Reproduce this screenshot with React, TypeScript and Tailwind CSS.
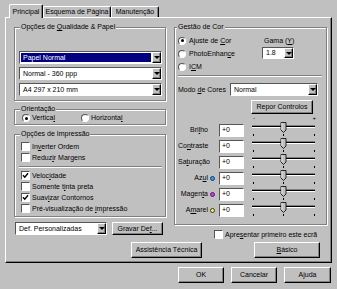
import React from "react";

const FONT = "font-['Liberation_Sans',Arial,sans-serif]";
const sunken = "border border-t-[#555] border-l-[#555] border-b-white border-r-white";
const raised =
  "border border-t-white border-l-white border-b-black border-r-black shadow-[inset_-1px_-1px_0_#808080] bg-[#c0c0c0]";

function Arrow() {
  return (
    <div className={`w-[9px] h-full flex items-center justify-center ${raised}`}>
      <div className="w-0 h-0 border-x-[3px] border-x-transparent border-t-[3px] border-t-black" />
    </div>
  );
}

function Select({ value, hl, className = "" }: { value: string; hl?: boolean; className?: string }) {
  return (
    <div className={`flex bg-white ${sunken} ${className}`}>
      <div
        className={`flex-1 flex items-center pl-[2px] m-[1px] whitespace-nowrap overflow-hidden ${
          hl ? "bg-[#000080] text-white" : ""
        }`}
      >
        {value}
      </div>
      <Arrow />
    </div>
  );
}

function Button({ children, className = "" }: { children: React.ReactNode; className?: string }) {
  return (
    <div className={`flex items-center justify-center whitespace-nowrap ${raised} ${className}`}>{children}</div>
  );
}

function Radio({ on }: { on?: boolean }) {
  return (
    <div
      className={`w-[8px] h-[8px] rounded-full bg-white flex items-center justify-center shrink-0 ${sunken}`}
    >
      {on && <div className="w-[3px] h-[3px] rounded-full bg-black" />}
    </div>
  );
}

function Check({ on }: { on?: boolean }) {
  return (
    <div className={`w-[9px] h-[9px] bg-white shrink-0 flex items-center justify-center ${sunken}`}>
      {on && (
        <svg width="7" height="7" viewBox="0 0 7 7">
          <path d="M1 3.2 L2.8 5.2 L6 1.3" fill="none" stroke="#000" strokeWidth="1.4" />
        </svg>
      )}
    </div>
  );
}

function Group({
  title,
  legend,
  className = "",
  children,
}: {
  title: React.ReactNode;
  legend: string;
  className?: string;
  children: React.ReactNode;
}) {
  return (
    <fieldset
      className={`border border-[#808080] shadow-[inset_1px_1px_0_#fff,1px_1px_0_#fff] min-w-0 ${className}`}
    >
      <legend className={`px-[1px] leading-[8px] bg-[#c0c0c0] ${legend}`}>{title}</legend>
      {children}
    </fieldset>
  );
}

function Slider() {
  return (
    <svg width="66" height="16" viewBox="0 0 66 16" className="self-start -mt-px">
      <rect x="1" y="3" width="63" height="1" fill="#808080" />
      <rect x="1" y="4" width="63" height="1" fill="#000" />
      <rect x="1" y="5" width="63" height="1" fill="#fff" />
      <polygon points="30,0.5 35,0.5 35,8 32.5,10.5 30,8" fill="#c0c0c0" stroke="#000" strokeWidth="0.8" />
      <line x1="30.8" y1="1" x2="30.8" y2="8" stroke="#fff" strokeWidth="0.8" />
      <rect x="2" y="12" width="1" height="2" fill="#000" />
      <rect x="32" y="12" width="1" height="2" fill="#000" />
      <rect x="63" y="12" width="1" height="2" fill="#000" />
    </svg>
  );
}

const rows: { label: React.ReactNode; dot?: string }[] = [
  { label: <>Bri<u>l</u>ho</> },
  { label: <>Co<u>n</u>traste</> },
  { label: <>Sa<u>t</u>uração</> },
  { label: <>Az<u>u</u>l</>, dot: "bg-[#19a8ff]" },
  { label: <>Magen<u>t</u>a</>, dot: "bg-[#ff1aff]" },
  { label: <>A<u>m</u>arel</>, dot: "bg-[#ffff00]" },
];

function Tab({ active, w, children }: { active?: boolean; w: string; children: React.ReactNode }) {
  return (
    <div
      className={`${w} ${
        active ? "h-[14px] -mb-px relative z-10" : "h-[11px]"
      } flex items-center justify-center whitespace-nowrap bg-[#c0c0c0] border-t border-l border-t-white border-l-white border-r border-r-black rounded-t-[2px] shadow-[inset_-1px_0_0_#808080]`}
    >
      {children}
    </div>
  );
}

export default function App() {
  return (
    <div
      className={`w-[337px] h-[289px] bg-[#c0c0c0] text-[7px] leading-[8px] text-black flex flex-col pt-[4px] ${FONT}`}
    >
      <div className="flex items-end h-[13px] pl-[9px]">
        <Tab active w="w-[34px]">
          Principal
        </Tab>
        <Tab w="w-[68px]">Esquema de Página</Tab>
        <Tab w="w-[48px]">Manutenção</Tab>
      </div>

      <div
        className={`ml-[5px] w-[327px] h-[246px] border border-t-white border-l-white border-r-black border-b-black shadow-[inset_-1px_-1px_0_#808080] pt-[5px] pl-[8px] flex flex-col`}
      >
        <div className="flex gap-[8px] items-start">
          {/* left column */}
          <div className="w-[152px] flex flex-col">
            <Group
              legend="ml-[5px]"
              title={
                <>
                  Opções de <u>Q</u>ualidade &amp; Papel
                </>
              }
            >
              <div className="flex flex-col gap-[3px] pt-[20px] pb-[4px] pl-[4px] pr-[3px]">
                <Select value="Papel Normal" hl className="h-[13px]" />
                <Select value="Normal - 360 ppp" className="h-[13px]" />
                <Select value="A4 297 x 210 mm" className="h-[13px]" />
              </div>
            </Group>

            <Group legend="ml-[5px]" title="Orientação" className="mt-[4px]">
              <div className="flex items-center h-[8px] mt-[1px] mb-[2px] pl-[7px]">
                <div className="w-[59px] flex items-center gap-[2px]">
                  <Radio on />
                  <span>
                    Vertica<u>l</u>
                  </span>
                </div>
                <div className="flex items-center gap-[2px]">
                  <Radio />
                  <span>
                    Horizonta<u>l</u>
                  </span>
                </div>
              </div>
            </Group>

            <Group legend="ml-[5px]" title="Opções de Impressão" className="mt-[5px]">
              <div className="flex flex-col pt-[3px] pb-[2px] pl-[6px]">
                {[
                  { on: false, t: <>In<u>v</u>erter Ordem</> },
                  { on: false, t: <>Reduz<u>i</u>r Margens</> },
                ].map((r, i) => (
                  <div key={i} className="h-[11px] flex items-center gap-[2px]">
                    <Check on={r.on} />
                    <span>{r.t}</span>
                  </div>
                ))}
                <div className="h-[7px] flex items-center ml-[-2px] mr-[3px]">
                  <div className="w-full h-[2px] border-t border-t-[#808080] border-b border-b-white" />
                </div>
                {[
                  { on: true, t: <>Veloc<u>i</u>dade</> },
                  { on: false, t: <>Somente t<u>i</u>nta preta</> },
                  { on: true, t: <>Suav<u>i</u>zar Contornos</> },
                  { on: false, t: <>Pré-visualização de <u>i</u>mpressão</> },
                ].map((r, i) => (
                  <div key={i} className="h-[11px] flex items-center gap-[2px]">
                    <Check on={r.on} />
                    <span>{r.t}</span>
                  </div>
                ))}
              </div>
            </Group>

            <div className="flex mt-[5px] ml-[1px] gap-[5px]">
              <Select value="Def. Personalizadas" className="w-[92px] h-[13px]" />
              <Button className="w-[51px] h-[13px]">
                Gravar De<u>f</u>...
              </Button>
            </div>
          </div>

          {/* right column */}
          <div className="w-[153px] flex flex-col">
            <Group legend="ml-[2px]" title="Gestão de Cor">
              <div className="flex flex-col pt-[3px] pb-[6px] pl-[3px]">
                <div className="flex">
                  <div className="w-[84px] flex flex-col">
                    <div className="h-[13px] flex items-center gap-[3px]">
                      <Radio on />
                      <span>
                        Ajuste de <u>C</u>or
                      </span>
                    </div>
                    <div className="h-[13px] flex items-center gap-[3px]">
                      <Radio />
                      <span>
                        PhotoEnhan<u>c</u>e
                      </span>
                    </div>
                    <div className="h-[13px] flex items-center gap-[3px]">
                      <Radio />
                      <span>
                        I<u>C</u>M
                      </span>
                    </div>
                  </div>
                  <div className="w-[32px] flex flex-col">
                    <div className="h-[13px] flex items-center pl-[2px] whitespace-nowrap">
                      Gama (<u>Y</u>)
                    </div>
                    <Select value="1.8" className="h-[12px]" />
                  </div>
                </div>

                <div className="mt-[2px] mr-[4px] h-[2px] border-t border-t-[#808080] border-b border-b-white" />

                <div className="mt-[6px] h-[13px] flex items-center">
                  <span className="w-[52px] whitespace-nowrap">
                    Modo <u>d</u>e Cores
                  </span>
                  <Select value="Normal" className="w-[88px] h-[13px]" />
                </div>

                <Button className="mt-[4px] ml-[73px] w-[62px] h-[14px]">Repor Controlos</Button>

                <div className="h-[8px] ml-[75px] w-[63px] flex items-center justify-between text-[6px]">
                  <span>-</span>
                  <span>+</span>
                </div>

                {rows.map((r, i) => (
                  <div key={i} className="h-[16px] flex items-center">
                    <span className="w-[30px] text-right whitespace-nowrap">{r.label}</span>
                    <div className="w-[11px] pl-[2px] flex items-center">
                      {r.dot && (
                        <div className={`w-[5px] h-[5px] rounded-full border-[0.5px] border-[#303060] ${r.dot}`} />
                      )}
                    </div>
                    <div className={`w-[25px] h-[13px] bg-white flex items-center pl-[2px] ${sunken}`}>+0</div>
                    <div className="ml-[7px] flex">
                      <Slider />
                    </div>
                  </div>
                ))}
              </div>
            </Group>

            <div className="mt-[5px] ml-[40px] h-[9px] flex items-center gap-[2px]">
              <Check />
              <span>
                Apre<u>s</u>entar primeiro este ecrã
              </span>
            </div>
          </div>
        </div>

        <div className="flex mt-[3px]">
          <Button className="ml-[117px] w-[71px] h-[16px]">Assistência Técnica</Button>
          <Button className="ml-[52px] w-[66px] h-[16px]">
            <u>B</u>ásico
          </Button>
        </div>
      </div>

      <div className="flex justify-end gap-[7px] pr-[6px] mt-[4px]">
        <Button className="w-[46px] h-[16px]">OK</Button>
        <Button className="w-[46px] h-[16px]">Cancelar</Button>
        <Button className="w-[47px] h-[16px]">Ajuda</Button>
      </div>
    </div>
  );
}
